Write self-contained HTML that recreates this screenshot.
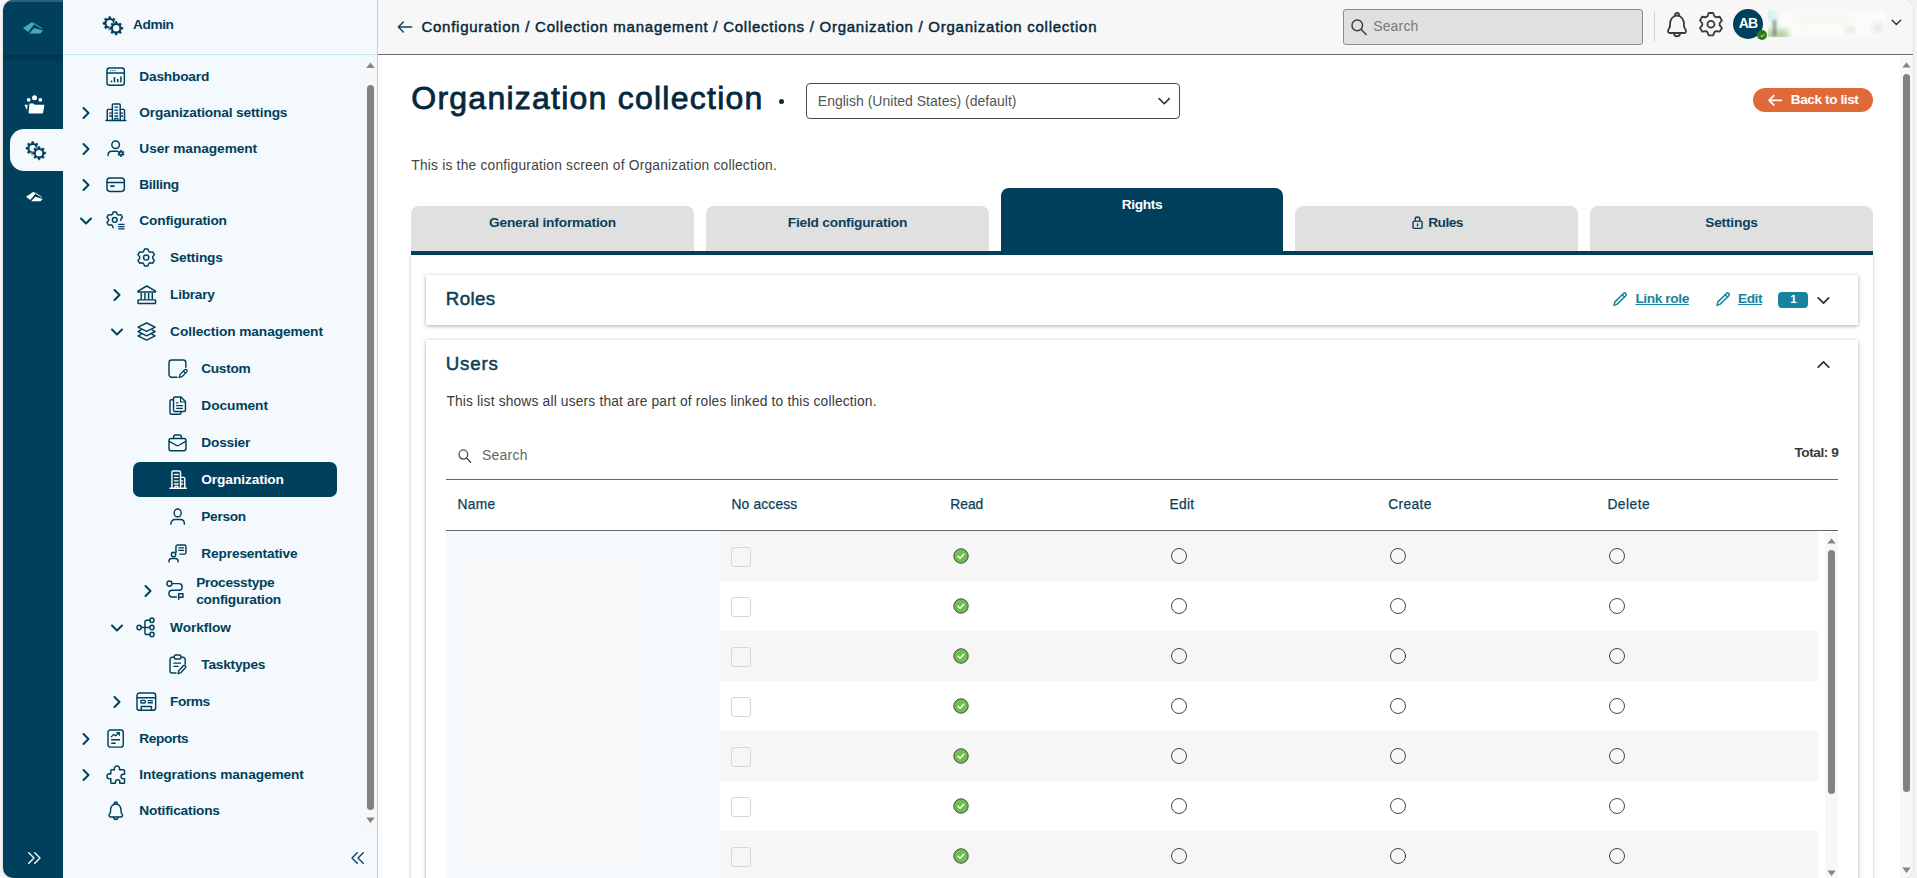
<!DOCTYPE html>
<html lang="en"><head><meta charset="utf-8"><title>Organization collection</title>
<style>
*{box-sizing:border-box}
html,body{margin:0;padding:0}
body{width:1917px;height:878px;overflow:hidden;background:#f3f3f3;font-family:"Liberation Sans",sans-serif;position:relative;color:#333}
.abs,.t{position:absolute}
.t{white-space:nowrap;line-height:20px;height:20px}
.nav{color:#003f5b}
svg{overflow:visible}
svg.fi *{vector-effect:non-scaling-stroke}
</style></head><body>
<div class="abs" style="left:3px;top:0;width:1910px;height:878px;background:#fff;border-radius:10px 9px 9px 10px;overflow:hidden;box-shadow:0 0 0 1px #e6e6e6"><div class="abs" style="left:0;top:0;width:60px;height:878px;background:#00405c"></div><div class="abs" style="left:0;top:55px;width:60px;height:8px;background:linear-gradient(#003249,#00405c)"></div><div class="abs" style="left:0;top:0;width:60px;height:1.5px;background:#2a6179"></div><div class="abs" style="left:7px;top:129px;width:56px;height:42px;background:#f4f9fd;border-radius:14px 0 0 14px"></div><div class="abs" style="left:60px;top:0;width:315px;height:878px;background:#f4f9fd;border-right:1px solid #cbcbcb"></div><div class="abs" style="left:60px;top:54px;width:314px;height:1px;background:#c5e6ee"></div><div class="abs" style="left:375px;top:0;width:1536px;height:55px;background:#f7f7f7;border-bottom:1px solid #6b6b6b"></div><svg class="abs" style="left:20px;top:21px" width="21" height="14" viewBox="0 0 21 14"><path d="M0 7L9 1 11.300 3.300 5.100 11.100z" fill="#4aa5c5"/><path d="M9.600 1L17.500 6 20 8.800 12 3.800z" fill="#4aa5c5"/><path d="M6.100 12.600L11.200 7 20 9.600 17.400 12.400z" fill="#4aa5c5"/></svg><svg class="abs" style="left:23px;top:190.5px" width="17.5" height="11.500" viewBox="0 0 21 14" preserveAspectRatio="none"><path d="M0 7L9 1 11.300 3.300 5.100 11.100z" fill="#fff"/><path d="M9.600 1L17.500 6 20 8.800 12 3.800z" fill="#fff"/><path d="M6.100 12.600L11.200 7 20 9.600 17.400 12.400z" fill="#fff"/></svg><svg class="abs" style="left:21px;top:95px" width="21" height="19" viewBox="0 0 21 19" fill="#fff"><circle cx="10.500" cy="2.700" r="2.500"/><circle cx="4.700" cy="4.800" r="1.900"/><circle cx="16.300" cy="4.800" r="1.900"/><path d="M5.500 8.500h4l1.200 1.200h8.600a1 1 0 0 1 1 1.200l-1.200 6.600a1.200 1.200 0 0 1-1.200 1H5.500a1 1 0 0 1-1-1z"/><path d="M.500 9.800h3.200l-.8 5.400z"/></svg><svg style="position:absolute;left:22.7px;top:140.5px" width="19.6" height="19.6" viewBox="0 0 20 20"><path d="M5.55 2.35 L5.99 0.55 L7.61 0.55 L8.05 2.35 L9.48 2.95 L11.07 1.98 L12.22 3.13 L11.25 4.72 L11.85 6.15 L13.65 6.59 L13.65 8.21 L11.85 8.65 L11.25 10.08 L12.22 11.67 L11.07 12.82 L9.48 11.85 L8.05 12.45 L7.61 14.25 L5.99 14.25 L5.55 12.45 L4.12 11.85 L2.53 12.82 L1.38 11.67 L2.35 10.08 L1.75 8.65 L-0.05 8.21 L-0.05 6.59 L1.75 6.15 L2.35 4.72 L1.38 3.13 L2.53 1.98 L4.12 2.95Z" fill="#00405c" stroke="#00405c" stroke-width="0.5" stroke-linejoin="round"/><circle cx="6.8" cy="7.4" r="3.25" fill="#f4f9fd"/><circle cx="13.3" cy="12.4" r="5.2" fill="#f4f9fd"/><path d="M12.05 7.35 L12.49 5.55 L14.11 5.55 L14.55 7.35 L15.98 7.95 L17.57 6.98 L18.72 8.13 L17.75 9.72 L18.35 11.15 L20.15 11.59 L20.15 13.21 L18.35 13.65 L17.75 15.08 L18.72 16.67 L17.57 17.82 L15.98 16.85 L14.55 17.45 L14.11 19.25 L12.49 19.25 L12.05 17.45 L10.62 16.85 L9.03 17.82 L7.88 16.67 L8.85 15.08 L8.25 13.65 L6.45 13.21 L6.45 11.59 L8.25 11.15 L8.85 9.72 L7.88 8.13 L9.03 6.98 L10.62 7.95Z" fill="#f4f9fd" stroke="#f4f9fd" stroke-width="1.5" stroke-linejoin="round"/><path d="M12.05 7.35 L12.49 5.55 L14.11 5.55 L14.55 7.35 L15.98 7.95 L17.57 6.98 L18.72 8.13 L17.75 9.72 L18.35 11.15 L20.15 11.59 L20.15 13.21 L18.35 13.65 L17.75 15.08 L18.72 16.67 L17.57 17.82 L15.98 16.85 L14.55 17.45 L14.11 19.25 L12.49 19.25 L12.05 17.45 L10.62 16.85 L9.03 17.82 L7.88 16.67 L8.85 15.08 L8.25 13.65 L6.45 13.21 L6.45 11.59 L8.25 11.15 L8.85 9.72 L7.88 8.13 L9.03 6.98 L10.62 7.95Z" fill="#00405c" stroke="#00405c" stroke-width="0.5" stroke-linejoin="round"/><circle cx="13.3" cy="12.4" r="3.25" fill="#f4f9fd"/></svg><svg style="position:absolute;left:21.5px;top:848.5px;color:#fff;" width="18" height="18" viewBox="0 0 24 24" fill="none" stroke="currentColor" stroke-width="1.867" stroke-linecap="round" stroke-linejoin="round"><path d="M5 5l7 7-7 7M13 5l7 7-7 7"/></svg><svg style="position:absolute;left:100.1px;top:15.999999999999998px" width="19.8" height="19.8" viewBox="0 0 20 20"><path d="M5.55 2.35 L5.99 0.55 L7.61 0.55 L8.05 2.35 L9.48 2.95 L11.07 1.98 L12.22 3.13 L11.25 4.72 L11.85 6.15 L13.65 6.59 L13.65 8.21 L11.85 8.65 L11.25 10.08 L12.22 11.67 L11.07 12.82 L9.48 11.85 L8.05 12.45 L7.61 14.25 L5.99 14.25 L5.55 12.45 L4.12 11.85 L2.53 12.82 L1.38 11.67 L2.35 10.08 L1.75 8.65 L-0.05 8.21 L-0.05 6.59 L1.75 6.15 L2.35 4.72 L1.38 3.13 L2.53 1.98 L4.12 2.95Z" fill="#003f5b" stroke="#003f5b" stroke-width="0.5" stroke-linejoin="round"/><circle cx="6.8" cy="7.4" r="3.25" fill="#f4f9fd"/><circle cx="13.3" cy="12.4" r="5.2" fill="#f4f9fd"/><path d="M12.05 7.35 L12.49 5.55 L14.11 5.55 L14.55 7.35 L15.98 7.95 L17.57 6.98 L18.72 8.13 L17.75 9.72 L18.35 11.15 L20.15 11.59 L20.15 13.21 L18.35 13.65 L17.75 15.08 L18.72 16.67 L17.57 17.82 L15.98 16.85 L14.55 17.45 L14.11 19.25 L12.49 19.25 L12.05 17.45 L10.62 16.85 L9.03 17.82 L7.88 16.67 L8.85 15.08 L8.25 13.65 L6.45 13.21 L6.45 11.59 L8.25 11.15 L8.85 9.72 L7.88 8.13 L9.03 6.98 L10.62 7.95Z" fill="#f4f9fd" stroke="#f4f9fd" stroke-width="1.5" stroke-linejoin="round"/><path d="M12.05 7.35 L12.49 5.55 L14.11 5.55 L14.55 7.35 L15.98 7.95 L17.57 6.98 L18.72 8.13 L17.75 9.72 L18.35 11.15 L20.15 11.59 L20.15 13.21 L18.35 13.65 L17.75 15.08 L18.72 16.67 L17.57 17.82 L15.98 16.85 L14.55 17.45 L14.11 19.25 L12.49 19.25 L12.05 17.45 L10.62 16.85 L9.03 17.82 L7.88 16.67 L8.85 15.08 L8.25 13.65 L6.45 13.21 L6.45 11.59 L8.25 11.15 L8.85 9.72 L7.88 8.13 L9.03 6.98 L10.62 7.95Z" fill="#003f5b" stroke="#003f5b" stroke-width="0.5" stroke-linejoin="round"/><circle cx="13.3" cy="12.4" r="3.25" fill="#f4f9fd"/></svg><div class="t nav" style="left:130px;top:13.7px"><span style="font-size:13.7px;font-weight:700;letter-spacing:-0.427px;margin-left:0;">Admin</span></div><div class="abs" style="left:130px;top:462px;width:204px;height:35px;background:#00405c;border-radius:7px"></div><svg class="fi" style="position:absolute;left:103.82px;top:67.62px;color:#003f5b" width="17.35" height="17.35" viewBox="2.000 2.000 20.000 20.000" preserveAspectRatio="none" fill="none" stroke="currentColor" stroke-width="1.45" stroke-linecap="round" stroke-linejoin="round"><rect x="2" y="2" width="20" height="20" rx="3"/><path d="M2 7.800h20"/><path d="M7.200 18.500v-2.200M10.600 18.500v-6M14.400 18.500v-3.800M18 18.500v-6.800" stroke-width="1.500" stroke-linecap="butt"/><path d="M6.200 5h.01M8.700 5h.01M11.200 5h.01" stroke-width="1.300"/></svg><div class="t" style="left:136.3px;top:66.4px;color:#003f5b"><span style="font-size:13.7px;font-weight:700;letter-spacing:-0.189px;margin-left:0;">Dashboard</span></div><svg style="position:absolute;left:73.1px;top:103.0px;color:#003f5b;" width="20" height="20" viewBox="0 0 24 24" fill="none" stroke="currentColor" stroke-width="2.4" stroke-linecap="round" stroke-linejoin="round"><path d="M9 6l6 6-6 6"/></svg><svg class="fi" style="position:absolute;left:102.52px;top:103.92px;color:#003f5b" width="19.85" height="16.55" viewBox="0.300 2.500 24.000 18.500" preserveAspectRatio="none" fill="none" stroke="currentColor" stroke-width="1.45" stroke-linecap="round" stroke-linejoin="round"><path d="M8 21V3.500a1 1 0 0 1 1-1h7.500a1 1 0 0 1 1 1V21"/><path d="M8 8.500H2.800a1 1 0 0 0-1 1V21M17.500 8.500h4.200a1 1 0 0 1 1 1V21M.3 21h24"/><path d="M10.500 6h4.500M10.500 9.300h4.500M10.500 12.600h4.500M10.500 15.900h4.500M4 12.600h4M4 15.900h4M17.500 12.600h3.500M17.500 15.900h3.500" stroke-width="1.300" stroke-linecap="butt"/><path d="M11 21v-2.500h3.500V21" stroke-width="1.300"/></svg><div class="t" style="left:136.3px;top:102.4px;color:#003f5b"><span style="font-size:13.7px;font-weight:700;letter-spacing:-0.144px;margin-left:0;">Organizational settings</span></div><svg style="position:absolute;left:73.1px;top:139.0px;color:#003f5b;" width="20" height="20" viewBox="0 0 24 24" fill="none" stroke="currentColor" stroke-width="2.4" stroke-linecap="round" stroke-linejoin="round"><path d="M9 6l6 6-6 6"/></svg><svg class="fi" style="position:absolute;left:104.72px;top:140.92px;color:#003f5b" width="16.05" height="15.45" viewBox="0.500 1.500 20.990 20.610" preserveAspectRatio="none" fill="none" stroke="currentColor" stroke-width="1.45" stroke-linecap="round" stroke-linejoin="round"><circle cx="10.500" cy="6.500" r="5"/><path d="M.5 21c0-3 1.500-5.800 5-5.800h7.500"/><path d="M16.39 15.32 L16.63 13.89 L18.37 13.89 L18.61 15.32 L19.27 15.70 L20.62 15.19 L21.49 16.70 L20.38 17.62 L20.38 18.38 L21.49 19.30 L20.62 20.81 L19.27 20.30 L18.61 20.68 L18.37 22.11 L16.63 22.11 L16.39 20.68 L15.73 20.30 L14.38 20.81 L13.51 19.30 L14.62 18.38 L14.62 17.62 L13.51 16.70 L14.38 15.19 L15.73 15.70Z" fill="currentColor" stroke-width="0.700"/><circle cx="17.500" cy="18" r="1.200" fill="#f4f9fd" stroke="none"/></svg><div class="t" style="left:136.3px;top:138.4px;color:#003f5b"><span style="font-size:13.7px;font-weight:700;letter-spacing:-0.056px;margin-left:0;">User management</span></div><svg style="position:absolute;left:73.1px;top:175.0px;color:#003f5b;" width="20" height="20" viewBox="0 0 24 24" fill="none" stroke="currentColor" stroke-width="2.4" stroke-linecap="round" stroke-linejoin="round"><path d="M9 6l6 6-6 6"/></svg><svg class="fi" style="position:absolute;left:103.82px;top:177.72px;color:#003f5b" width="17.35" height="13.45" viewBox="2.000 4.000 20.000 16.000" preserveAspectRatio="none" fill="none" stroke="currentColor" stroke-width="1.45" stroke-linecap="round" stroke-linejoin="round"><rect x="2" y="4" width="20" height="16" rx="3.400"/><path d="M2 9.400h20"/><path d="M6.500 13.600h3.500" stroke-width="1.700"/></svg><div class="t" style="left:136.3px;top:174.4px;color:#003f5b"><span style="font-size:13.7px;font-weight:700;letter-spacing:-0.324px;margin-left:0;">Billing</span></div><svg style="position:absolute;left:73.1px;top:211.0px;color:#003f5b;" width="20" height="20" viewBox="0 0 24 24" fill="none" stroke="currentColor" stroke-width="2.4" stroke-linecap="round" stroke-linejoin="round"><path d="M6 9l6 6 6-6"/></svg><svg class="fi" style="position:absolute;left:103.82px;top:211.82px;color:#003f5b" width="17.55" height="16.95" viewBox="0.930 0.570 20.570 20.230" preserveAspectRatio="none" fill="none" stroke="currentColor" stroke-width="1.45" stroke-linecap="round" stroke-linejoin="round"><path d="M8.20 19.43 L7.07 16.58 L5.77 15.82 L2.73 16.27 L0.93 13.16 L2.84 10.75 L2.84 9.25 L0.93 6.84 L2.73 3.73 L5.77 4.18 L7.07 3.42 L8.20 0.57 L11.80 0.57 L12.93 3.42 L14.23 4.18 L17.27 3.73 L19.07 6.84 L17.16 9.25 L17.16 10.75"/><circle cx="10" cy="10" r="2.800"/><path d="M14 15.400h7.500M14 18.100h7.500M14 20.800h7.500" stroke-width="1.300" stroke-linecap="butt"/></svg><div class="t" style="left:136.3px;top:210.4px;color:#003f5b"><span style="font-size:13.7px;font-weight:700;letter-spacing:-0.169px;margin-left:0;">Configuration</span></div><svg class="fi" style="position:absolute;left:135.03px;top:248.82px;color:#003f5b" width="16.35" height="17.05" viewBox="1.610 1.190 20.780 21.620" preserveAspectRatio="none" fill="none" stroke="currentColor" stroke-width="1.45" stroke-linecap="round" stroke-linejoin="round"><path d="M8.62 4.42 L9.94 1.19 L14.06 1.19 L15.38 4.42 L16.88 5.29 L20.33 4.81 L22.39 8.38 L20.25 11.13 L20.25 12.87 L22.39 15.62 L20.33 19.19 L16.88 18.71 L15.38 19.58 L14.06 22.81 L9.94 22.81 L8.62 19.58 L7.12 18.71 L3.67 19.19 L1.61 15.62 L3.75 12.87 L3.75 11.13 L1.61 8.38 L3.67 4.81 L7.12 5.29Z"/><circle cx="12" cy="12" r="3.3"/></svg><div class="t" style="left:167.1px;top:247.4px;color:#003f5b"><span style="font-size:13.7px;font-weight:700;letter-spacing:-0.174px;margin-left:0;">Settings</span></div><svg style="position:absolute;left:103.9px;top:285.0px;color:#003f5b;" width="20" height="20" viewBox="0 0 24 24" fill="none" stroke="currentColor" stroke-width="2.4" stroke-linecap="round" stroke-linejoin="round"><path d="M9 6l6 6-6 6"/></svg><svg class="fi" style="position:absolute;left:134.72px;top:285.62px;color:#003f5b" width="17.55" height="17.55" viewBox="2.500 2.500 19.000 19.000" preserveAspectRatio="none" fill="none" stroke="currentColor" stroke-width="1.45" stroke-linecap="round" stroke-linejoin="round"><path d="M2.500 9V8L12 2.500 21.500 8v1z"/><path d="M6 10v7M10 10v7M14 10v7M18 10v7" stroke-linecap="butt"/><rect x="2.500" y="17.500" width="19" height="4" rx=".5"/></svg><div class="t" style="left:167.1px;top:284.4px;color:#003f5b"><span style="font-size:13.7px;font-weight:700;letter-spacing:-0.270px;margin-left:0;">Library</span></div><svg style="position:absolute;left:103.9px;top:322.0px;color:#003f5b;" width="20" height="20" viewBox="0 0 24 24" fill="none" stroke="currentColor" stroke-width="2.4" stroke-linecap="round" stroke-linejoin="round"><path d="M6 9l6 6 6-6"/></svg><svg class="fi" style="position:absolute;left:134.92px;top:322.73px;color:#003f5b" width="17.15" height="17.15" viewBox="2.500 2.500 19.000 18.500" preserveAspectRatio="none" fill="none" stroke="currentColor" stroke-width="1.45" stroke-linecap="round" stroke-linejoin="round"><path d="M12 2.500l9.500 4.500L12 11.500 2.500 7z"/><path d="M5.800 10l-3.300 1.700 9.500 4.600 9.500-4.600L18.200 10M5.800 14.700l-3.300 1.700L12 21l9.500-4.600-3.300-1.700"/></svg><div class="t" style="left:167.1px;top:321.4px;color:#003f5b"><span style="font-size:13.7px;font-weight:700;letter-spacing:-0.076px;margin-left:0;">Collection management</span></div><svg class="fi" style="position:absolute;left:166.12px;top:360.33px;color:#003f5b" width="18.15" height="17.55" viewBox="2.500 2.500 20.476 19.300" preserveAspectRatio="none" fill="none" stroke="currentColor" stroke-width="1.45" stroke-linecap="round" stroke-linejoin="round"><path d="M11.500 21.500H5.500a3 3 0 0 1-3-3v-13a3 3 0 0 1 3-3h13a3 3 0 0 1 3 3v5"/><path d="M14 21.800l.9-3.200 5.300-5.300a1.600 1.600 0 0 1 2.300 2.300l-5.300 5.300zM18.800 14.700l2.300 2.300" stroke-width="1.300"/></svg><div class="t" style="left:198.3px;top:358.4px;color:#003f5b"><span style="font-size:13.7px;font-weight:700;letter-spacing:-0.334px;margin-left:0;">Custom</span></div><svg class="fi" style="position:absolute;left:166.92px;top:396.73px;color:#003f5b" width="15.45" height="17.25" viewBox="3.500 2.500 17.500 19.000" preserveAspectRatio="none" fill="none" stroke="currentColor" stroke-width="1.45" stroke-linecap="round" stroke-linejoin="round"><path d="M9 2.500h7l5 5V17a1.500 1.500 0 0 1-1.500 1.500H9A1.500 1.500 0 0 1 7.500 17V4A1.500 1.500 0 0 1 9 2.500z"/><path d="M15.500 2.800V8h5.200" stroke-width="1.200"/><path d="M7.500 5.500H5A1.500 1.500 0 0 0 3.500 7v13A1.500 1.500 0 0 0 5 21.500h9.500A1.500 1.500 0 0 0 16 20v-1.500"/><path d="M10.500 9h2.500M10.500 12h7.500M10.500 15h7.500" stroke-width="1.200" stroke-linecap="butt"/></svg><div class="t" style="left:198.3px;top:395.4px;color:#003f5b"><span style="font-size:13.7px;font-weight:700;letter-spacing:-0.034px;margin-left:0;">Document</span></div><svg class="fi" style="position:absolute;left:166.12px;top:434.53px;color:#003f5b" width="16.95" height="15.75" viewBox="2.000 3.000 20.000 18.500" preserveAspectRatio="none" fill="none" stroke="currentColor" stroke-width="1.45" stroke-linecap="round" stroke-linejoin="round"><rect x="2" y="7" width="20" height="14.500" rx="2.500"/><path d="M7.500 7V5A2 2 0 0 1 9.500 3h5a2 2 0 0 1 2 2v2"/><path d="M2.300 10.500l8.700 4.800a2 2 0 0 0 2 0l8.700-4.800" stroke-width="1.300"/></svg><div class="t" style="left:198.3px;top:432.4px;color:#003f5b"><span style="font-size:13.7px;font-weight:700;letter-spacing:-0.206px;margin-left:0;">Dossier</span></div><svg class="fi" style="position:absolute;left:166.72px;top:470.93px;color:#fff" width="16.35" height="17.35" viewBox="2.000 2.500 21.000 19.000" preserveAspectRatio="none" fill="none" stroke="currentColor" stroke-width="1.45" stroke-linecap="round" stroke-linejoin="round"><path d="M4.500 21.500V4A1.500 1.500 0 0 1 6 2.500h8A1.500 1.500 0 0 1 15.500 4v17.500"/><path d="M15.500 9.500h4A1.500 1.500 0 0 1 21 11v10.500M2 21.500h21"/><path d="M7 6.300h6M7 9.800h6M7 13.300h6M7 16.800h6M15.500 13.300h3.500M15.500 16.800h3.500" stroke-width="1.400" stroke-linecap="butt"/><path d="M8.500 21.500v-2.200h3.500v2.200" stroke-width="1.300"/></svg><div class="t" style="left:198.3px;top:469.4px;color:#fff"><span style="font-size:13.7px;font-weight:700;letter-spacing:-0.088px;margin-left:0;">Organization</span></div><svg class="fi" style="position:absolute;left:167.92px;top:508.93px;color:#003f5b" width="13.35" height="15.25" viewBox="2.500 2.500 19.000 19.500" preserveAspectRatio="none" fill="none" stroke="currentColor" stroke-width="1.45" stroke-linecap="round" stroke-linejoin="round"><circle cx="12" cy="7.500" r="5"/><path d="M2.500 22v-.8c0-3.200 2.300-5.200 5.500-5.200h8c3.200 0 5.500 2 5.500 5.200v.8"/></svg><div class="t" style="left:198.3px;top:506.4px;color:#003f5b"><span style="font-size:13.7px;font-weight:700;letter-spacing:-0.324px;margin-left:0;">Person</span></div><svg class="fi" style="position:absolute;left:166.22px;top:545.12px;color:#003f5b" width="16.95" height="17.05" viewBox="0.800 3.000 21.200 20.500" preserveAspectRatio="none" fill="none" stroke="currentColor" stroke-width="1.45" stroke-linecap="round" stroke-linejoin="round"><path d="M10 11.500H9.500V5a2 2 0 0 1 2-2H20a2 2 0 0 1 2 2v7a2 2 0 0 1-2 2h-5.500"/><path d="M13 6.500h6M13 9.500h6" stroke-width="1.300"/><circle cx="6.500" cy="14.500" r="2.700"/><path d="M.8 23.500v-.8c0-2 1.400-3.400 3.400-3.400h4.600c2 0 3.400 1.400 3.400 3.400v.8"/></svg><div class="t" style="left:198.3px;top:543.4px;color:#003f5b"><span style="font-size:13.7px;font-weight:700;letter-spacing:-0.143px;margin-left:0;">Representative</span></div><svg style="position:absolute;left:103.9px;top:618.0px;color:#003f5b;" width="20" height="20" viewBox="0 0 24 24" fill="none" stroke="currentColor" stroke-width="2.4" stroke-linecap="round" stroke-linejoin="round"><path d="M6 9l6 6 6-6"/></svg><svg class="fi" style="position:absolute;left:134.32px;top:618.02px;color:#003f5b" width="17.05" height="18.85" viewBox="0.800 0.800 21.900 22.400" preserveAspectRatio="none" fill="none" stroke="currentColor" stroke-width="1.45" stroke-linecap="round" stroke-linejoin="round"><circle cx="3.500" cy="12" r="2.700"/><circle cx="20" cy="3.500" r="2.700"/><circle cx="20" cy="12" r="2.700"/><circle cx="20" cy="20.500" r="2.700"/><path d="M6.200 12h11.100M17.300 3.500h-3.800a2.500 2.500 0 0 0-2.500 2.500v12a2.500 2.500 0 0 0 2.500 2.500h3.800"/></svg><div class="t" style="left:167.1px;top:617.4px;color:#003f5b"><span style="font-size:13.7px;font-weight:700;letter-spacing:-0.080px;margin-left:0;">Workflow</span></div><svg class="fi" style="position:absolute;left:167.03px;top:655.23px;color:#003f5b" width="15.75" height="18.55" viewBox="3.000 2.000 18.629 20.500" preserveAspectRatio="none" fill="none" stroke="currentColor" stroke-width="1.45" stroke-linecap="round" stroke-linejoin="round"><path d="M8 4.500H5.500A2.500 2.500 0 0 0 3 7v12.500A2.500 2.500 0 0 0 5.500 22H10M16 4.500h2.500A2.500 2.500 0 0 1 21 7v5"/><rect x="8" y="2" width="8" height="4.500" rx="2"/><path d="M7.500 11h8M7.500 14.500h5" stroke-width="1.300"/><path d="M12.500 22.500l.8-3.200 5.500-5.500a1.700 1.700 0 0 1 2.400 2.400l-5.500 5.500z" stroke-width="1.400"/></svg><div class="t" style="left:198.3px;top:654.4px;color:#003f5b"><span style="font-size:13.7px;font-weight:700;letter-spacing:-0.232px;margin-left:0;">Tasktypes</span></div><svg style="position:absolute;left:103.9px;top:692.0px;color:#003f5b;" width="20" height="20" viewBox="0 0 24 24" fill="none" stroke="currentColor" stroke-width="2.4" stroke-linecap="round" stroke-linejoin="round"><path d="M9 6l6 6-6 6"/></svg><svg class="fi" style="position:absolute;left:134.03px;top:692.83px;color:#003f5b" width="18.65" height="17.35" viewBox="2.000 2.000 20.000 20.000" preserveAspectRatio="none" fill="none" stroke="currentColor" stroke-width="1.45" stroke-linecap="round" stroke-linejoin="round"><rect x="2" y="2" width="20" height="20" rx="2.800"/><path d="M2 7.500h20"/><rect x="6" y="10.500" width="5" height="3" rx="1" stroke-width="1.400"/><path d="M14 10.800h4.500M14 13.300h4.500" stroke-width="1.400"/><path d="M6.500 22v-4.500h11V22"/></svg><div class="t" style="left:167.1px;top:691.4px;color:#003f5b"><span style="font-size:13.7px;font-weight:700;letter-spacing:-0.440px;margin-left:0;">Forms</span></div><svg style="position:absolute;left:73.1px;top:729.0px;color:#003f5b;" width="20" height="20" viewBox="0 0 24 24" fill="none" stroke="currentColor" stroke-width="2.4" stroke-linecap="round" stroke-linejoin="round"><path d="M9 6l6 6-6 6"/></svg><svg class="fi" style="position:absolute;left:104.92px;top:729.73px;color:#003f5b" width="15.25" height="17.15" viewBox="2.500 2.000 19.000 20.000" preserveAspectRatio="none" fill="none" stroke="currentColor" stroke-width="1.45" stroke-linecap="round" stroke-linejoin="round"><rect x="2.500" y="2" width="19" height="20" rx="2.800"/><path d="M6.500 13.500h11M6.500 17.500h5.500" stroke-width="1.500" stroke-linecap="butt"/><path d="M6.500 10l3.200-2.800 2.300 1.600 4.500-3.600M13.500 5h3.200v3" stroke-width="1.300"/></svg><div class="t" style="left:136.3px;top:728.4px;color:#003f5b"><span style="font-size:13.7px;font-weight:700;letter-spacing:-0.389px;margin-left:0;">Reports</span></div><svg style="position:absolute;left:73.1px;top:765.0px;color:#003f5b;" width="20" height="20" viewBox="0 0 24 24" fill="none" stroke="currentColor" stroke-width="2.4" stroke-linecap="round" stroke-linejoin="round"><path d="M9 6l6 6-6 6"/></svg><svg class="fi" style="position:absolute;left:103.82px;top:765.83px;color:#003f5b" width="17.55" height="17.35" viewBox="1.502 3.399 18.498 18.601" preserveAspectRatio="none" fill="none" stroke="currentColor" stroke-width="1.45" stroke-linecap="round" stroke-linejoin="round"><path d="M9.200 6.200a2.800 2.800 0 1 1 5.600 0c0 .5-.2.900-.2 1.300H19a1 1 0 0 1 1 1v3.800h-1.300a2.400 2.400 0 0 0 0 4.800H20V21a1 1 0 0 1-1 1h-4v-1.500a2.300 2.300 0 0 0-4.600 0V22H6.500a1 1 0 0 1-1-1v-4c-.4 0-.8.200-1.300.200a2.700 2.700 0 0 1 0-5.400c.5 0 .9.200 1.300.200V8.500a1 1 0 0 1 1-1h2.900c0-.4-.2-.8-.2-1.300z"/></svg><div class="t" style="left:136.3px;top:764.4px;color:#003f5b"><span style="font-size:13.7px;font-weight:700;letter-spacing:-0.090px;margin-left:0;">Integrations management</span></div><svg class="fi" style="position:absolute;left:105.72px;top:801.93px;color:#003f5b" width="13.55" height="17.35" viewBox="1.939 3.200 18.122 20.594" preserveAspectRatio="none" fill="none" stroke="currentColor" stroke-width="1.45" stroke-linecap="round" stroke-linejoin="round"><path d="M8.900 5.300a2.100 2.100 0 0 1 4.200 0"/><path d="M11 5.600C6.500 5.600 4 9 4 13v1.500c0 1.500-.8 2.300-1.600 3.400-1 1.400-.3 3 1.400 3h14.400c1.700 0 2.400-1.600 1.400-3-.8-1.100-1.600-1.900-1.600-3.400V13c0-4-2.500-7.400-7-7.400z"/><path d="M7.800 21.300a3.300 3.300 0 0 0 6.400 0"/></svg><div class="t" style="left:136.3px;top:800.4px;color:#003f5b"><span style="font-size:13.7px;font-weight:700;letter-spacing:-0.184px;margin-left:0;">Notifications</span></div><svg style="position:absolute;left:134.7px;top:581.0px;color:#003f5b;" width="20" height="20" viewBox="0 0 24 24" fill="none" stroke="currentColor" stroke-width="2.4" stroke-linecap="round" stroke-linejoin="round"><path d="M9 6l6 6-6 6"/></svg><svg class="fi" style="position:absolute;left:163.62px;top:581.23px;color:#003f5b" width="15.95" height="18.15" viewBox="1.300 1.800 20.700 22.200" preserveAspectRatio="none" fill="none" stroke="currentColor" stroke-width="1.45" stroke-linecap="round" stroke-linejoin="round"><circle cx="4.500" cy="5" r="3.200"/><path d="M7.700 5H17a4 4 0 0 1 0 8H8a4.200 4.200 0 0 0 0 8.400h5.500"/><path d="M16.500 24v-6.500h5.500v4.200h-5.500" stroke-width="1.500"/></svg><div class="t nav" style="left:193.2px;top:572.4px"><span style="font-size:13.7px;font-weight:700;letter-spacing:-0.294px;margin-left:0;">Processtype</span></div><div class="t nav" style="left:193.2px;top:589.4px"><span style="font-size:13.7px;font-weight:700;letter-spacing:-0.206px;margin-left:0;">configuration</span></div><svg style="position:absolute;left:346.0px;top:848.5px;color:#003f5b;" width="18" height="18" viewBox="0 0 24 24" fill="none" stroke="currentColor" stroke-width="1.867" stroke-linecap="round" stroke-linejoin="round"><path d="M11 5l-7 7 7 7M19 5l-7 7 7 7"/></svg><div class="abs" style="left:361px;top:55px;width:13px;height:774px;background:#f7f7f7"></div><div class="abs" style="left:364px;top:85px;width:7px;height:725px;background:#828282;border-radius:3.5px"></div><svg class="abs" style="left:363px;top:61.5px" width="9" height="6.5" viewBox="0 0 9 6" preserveAspectRatio="none"><path d="M0.300 5.500L4.500 0.500 8.700 5.500z" fill="#858585"/></svg><svg class="abs" style="left:363px;top:817px" width="9" height="6.5" viewBox="0 0 9 6" preserveAspectRatio="none"><path d="M0.300 .5L4.500 5.500 8.700 .5z" fill="#858585"/></svg><svg style="position:absolute;left:391.5px;top:17.0px;color:#0b4560;" width="20" height="20" viewBox="0 0 24 24" fill="none" stroke="currentColor" stroke-width="1.68" stroke-linecap="round" stroke-linejoin="round"><path d="M20 12H4M10 6l-6 6 6 6"/></svg><div class="t" style="left:418.4px;top:17.3px;color:#06283c"><span style="font-size:15px;font-weight:400;letter-spacing:0.749px;margin-left:0;-webkit-text-stroke:0.45px currentColor;">Configuration / Collection management / Collections / Organization / Organization collection</span></div><div class="abs" style="left:1340px;top:9px;width:300px;height:36px;background:#e0e0e0;border:1px solid #8c8c8c;border-radius:3px"></div><svg class="fi" style="position:absolute;left:1348.92px;top:19.53px;color:#3c3c3c" width="14.15" height="14.55" viewBox="3.500 3.500 17.500 17.500" preserveAspectRatio="none" fill="none" stroke="currentColor" stroke-width="1.45" stroke-linecap="round" stroke-linejoin="round"><circle cx="10" cy="10" r="6.5"/><path d="M15 15l6 6"/></svg><div class="t" style="left:1370.2px;top:16px;color:#7a7a7a"><span style="font-size:14px;font-weight:400;letter-spacing:0.156px;margin-left:0;">Search</span></div><div class="abs" style="left:1651px;top:12px;width:1px;height:30px;background:#d4d4d4"></div><svg class="fi" style="position:absolute;left:1665.00px;top:12.70px;color:#3a3a3a" width="18.00" height="23.30" viewBox="1.939 3.200 18.122 20.594" preserveAspectRatio="none" fill="none" stroke="currentColor" stroke-width="1.8" stroke-linecap="round" stroke-linejoin="round"><path d="M8.900 5.300a2.100 2.100 0 0 1 4.200 0"/><path d="M11 5.600C6.500 5.600 4 9 4 13v1.500c0 1.500-.8 2.300-1.600 3.400-1 1.400-.3 3 1.400 3h14.400c1.700 0 2.400-1.600 1.400-3-.8-1.100-1.600-1.900-1.600-3.400V13c0-4-2.500-7.400-7-7.400z"/><path d="M7.800 21.300a3.300 3.300 0 0 0 6.400 0"/></svg><svg class="fi" style="position:absolute;left:1697.10px;top:12.70px;color:#3a3a3a" width="21.90" height="22.40" viewBox="1.610 1.190 20.780 21.620" preserveAspectRatio="none" fill="none" stroke="currentColor" stroke-width="1.8" stroke-linecap="round" stroke-linejoin="round"><path d="M8.62 4.42 L9.94 1.19 L14.06 1.19 L15.38 4.42 L16.88 5.29 L20.33 4.81 L22.39 8.38 L20.25 11.13 L20.25 12.87 L22.39 15.62 L20.33 19.19 L16.88 18.71 L15.38 19.58 L14.06 22.81 L9.94 22.81 L8.62 19.58 L7.12 18.71 L3.67 19.19 L1.61 15.62 L3.75 12.87 L3.75 11.13 L1.61 8.38 L3.67 4.81 L7.12 5.29Z"/><circle cx="12" cy="12" r="3.3"/></svg><div class="abs" style="left:1730px;top:9px;width:30px;height:30px;border-radius:50%;background:#00405c"></div><div class="t" style="left:1730px;top:13.2px;width:30px;text-align:center;color:#fff"><span style="font-size:14px;font-weight:700;letter-spacing:-0.834px;margin-left:0;">AB</span></div><div class="abs" style="left:1754px;top:30px;width:10px;height:10px;border-radius:50%;background:#2f7d12"></div><svg class="abs" style="left:1756.5px;top:32.500px" width="5" height="5" viewBox="0 0 5 5" fill="none" stroke="#fff" stroke-width="0.9"><path d="M.7 2.600l1.300 1.200 2.300-2.500"/></svg><div class="abs" style="left:1765px;top:9.5px;width:118px;height:27.5px;background:#fbfbf9;overflow:hidden"><div class="abs" style="left:-3px;top:0;width:12px;height:12px;background:#d5eef0;filter:blur(3px)"></div><div class="abs" style="left:-2px;top:20px;width:22px;height:10px;background:#8fc07a;filter:blur(3px);opacity:.75"></div><div class="abs" style="left:4.5px;top:10px;width:3.5px;height:16px;background:#5d7a6a;filter:blur(1.6px);opacity:.8"></div><div class="abs" style="left:78px;top:17px;width:8px;height:6px;background:#e4e4e2;filter:blur(2.5px)"></div><div class="abs" style="left:106px;top:14px;width:8px;height:8px;background:#dedede;filter:blur(3px)"></div><div class="abs" style="left:30px;top:4px;width:50px;height:8px;background:#f6f4ec;filter:blur(4px)"></div></div><svg style="position:absolute;left:1884.6px;top:13.9px;color:#3a3a3a;" width="16.8" height="16.8" viewBox="0 0 24 24" fill="none" stroke="currentColor" stroke-width="2.286" stroke-linecap="round" stroke-linejoin="round"><path d="M6 9l6 6 6-6"/></svg><div class="t" style="left:408.3px;top:78px;height:40px;line-height:40px;color:#06283c"><span style="font-size:32px;font-weight:400;letter-spacing:1.240px;margin-left:0;-webkit-text-stroke:0.8px currentColor;">Organization collection</span></div><div class="abs" style="left:775.5px;top:98.500px;width:5px;height:5px;border-radius:50%;background:#0a2a3d"></div><div class="abs" style="left:803px;top:83px;width:374px;height:36px;background:#fff;border:1px solid #4a4a4a;border-radius:4px"></div><div class="t" style="left:814.8px;top:90.5px;color:#555"><span style="font-size:14px;font-weight:400;letter-spacing:0.009px;margin-left:0;">English (United States) (default)</span></div><svg style="position:absolute;left:1150.8px;top:90.8px;color:#333;" width="20.4" height="20.4" viewBox="0 0 24 24" fill="none" stroke="currentColor" stroke-width="1.941" stroke-linecap="round" stroke-linejoin="round"><path d="M6 9l6 6 6-6"/></svg><div class="abs" style="left:1750px;top:88px;width:120px;height:24px;background:#e0693a;border-radius:12px"></div><svg style="position:absolute;left:1762.9px;top:90.5px;color:#fff;" width="18.6" height="18.6" viewBox="0 0 24 24" fill="none" stroke="currentColor" stroke-width="2.194" stroke-linecap="round" stroke-linejoin="round"><path d="M20 12H4M10 6l-6 6 6 6"/></svg><div class="t" style="left:1787.8px;top:88.5px;color:#fff"><span style="font-size:13.6px;font-weight:700;letter-spacing:-0.405px;margin-left:0;">Back to list</span></div><div class="t" style="left:408.3px;top:155px;color:#444"><span style="font-size:13.8px;font-weight:400;letter-spacing:0.203px;margin-left:0;">This is the configuration screen of Organization collection.</span></div><div class="abs" style="left:408px;top:206px;width:283px;height:46px;background:#e0e0e0;border-radius:8px 8px 0 0"></div><div class="t" style="left:408px;top:212.2px;width:283px;text-align:center;color:#0b3f5a"><span style="font-size:13.7px;font-weight:700;letter-spacing:-0.160px;margin-left:0;">General information</span></div><div class="abs" style="left:703px;top:206px;width:283px;height:46px;background:#e0e0e0;border-radius:8px 8px 0 0"></div><div class="t" style="left:703px;top:212.2px;width:283px;text-align:center;color:#0b3f5a"><span style="font-size:13.7px;font-weight:700;letter-spacing:-0.200px;margin-left:0;">Field configuration</span></div><div class="abs" style="left:998px;top:188px;width:282px;height:64px;background:#00405c;border-radius:8px 8px 0 0"></div><div class="t" style="left:998px;top:194.2px;width:282px;text-align:center;color:#fff"><span style="font-size:13.7px;font-weight:700;letter-spacing:-0.382px;margin-left:0;">Rights</span></div><div class="abs" style="left:1292px;top:206px;width:283px;height:46px;background:#e0e0e0;border-radius:8px 8px 0 0"></div><div class="t" style="left:1301px;top:212.2px;width:283px;text-align:center;color:#0b3f5a"><span style="font-size:13.7px;font-weight:700;letter-spacing:-0.549px;margin-left:0;">Rules</span></div><div class="abs" style="left:1587px;top:206px;width:283px;height:46px;background:#e0e0e0;border-radius:8px 8px 0 0"></div><div class="t" style="left:1587px;top:212.2px;width:283px;text-align:center;color:#0b3f5a"><span style="font-size:13.7px;font-weight:700;letter-spacing:-0.188px;margin-left:0;">Settings</span></div><svg class="fi" style="position:absolute;left:1410.20px;top:216.50px;color:#0b3f5a" width="9.10" height="11.40" viewBox="4.500 3.000 15.000 18.000" preserveAspectRatio="none" fill="none" stroke="currentColor" stroke-width="1.4" stroke-linecap="round" stroke-linejoin="round"><rect x="4.500" y="9.500" width="15" height="11.500" rx="2"/><path d="M8 9.500V7a4 4 0 0 1 8 0v2.500M12 14v3"/></svg><div class="abs" style="left:408px;top:251px;width:1462px;height:4px;background:#00405c"></div><div class="abs" style="left:407px;top:255px;width:1464px;height:640px;background:#fff;border-left:1px solid #e2e2e2;border-right:1px solid #e2e2e2;box-shadow:0 0 3px rgba(0,0,0,.12)"></div><div class="abs" style="left:423px;top:275px;width:1432px;height:50px;background:#fff;box-shadow:0 1px 4px rgba(0,0,0,.35)"></div><div class="abs" style="left:423px;top:340px;width:1432px;height:561px;background:#fff;box-shadow:0 1px 4px rgba(0,0,0,.35)"></div><div class="t" style="left:442.8px;top:287.4px;height:24px;line-height:24px;color:#0b3f5a;"><span style="font-size:18.7px;font-weight:400;letter-spacing:0.394px;margin-left:0;-webkit-text-stroke:0.5px currentColor;">Roles</span></div><div class="t" style="left:442.8px;top:352.4px;height:24px;line-height:24px;color:#0b3f5a;"><span style="font-size:18.7px;font-weight:400;letter-spacing:0.786px;margin-left:0;-webkit-text-stroke:0.5px currentColor;">Users</span></div><svg class="fi" style="position:absolute;left:1610.65px;top:293.35px;color:#17839e" width="12.30" height="12.40" viewBox="4.000 3.379 16.121 16.621" preserveAspectRatio="none" fill="none" stroke="currentColor" stroke-width="1.5" stroke-linecap="round" stroke-linejoin="round"><path d="M4 20l1.200-4.700L16.500 4a2.100 2.100 0 0 1 3 3L8.200 18.300z"/><path d="M14.800 5.700l3 3"/></svg><div class="t" style="left:1632.4px;top:288.4px;color:#17839e;text-decoration:underline"><span style="font-size:13.7px;font-weight:700;letter-spacing:-0.395px;margin-left:0;">Link role</span></div><svg class="fi" style="position:absolute;left:1713.75px;top:293.35px;color:#17839e" width="12.30" height="12.40" viewBox="4.000 3.379 16.121 16.621" preserveAspectRatio="none" fill="none" stroke="currentColor" stroke-width="1.5" stroke-linecap="round" stroke-linejoin="round"><path d="M4 20l1.200-4.700L16.500 4a2.100 2.100 0 0 1 3 3L8.200 18.300z"/><path d="M14.800 5.700l3 3"/></svg><div class="t" style="left:1735.1px;top:288.4px;color:#17839e;text-decoration:underline"><span style="font-size:13.7px;font-weight:700;letter-spacing:-0.491px;margin-left:0;">Edit</span></div><div class="abs" style="left:1775px;top:292px;width:30px;height:16px;background:#17839e;border-radius:4px"></div><div class="t" style="left:1775.4px;top:288.6px;width:30px;text-align:center;color:#fff;font-size:11.5px;font-weight:700">1</div><svg style="position:absolute;left:1809.5px;top:289.5px;color:#333;" width="21" height="21" viewBox="0 0 24 24" fill="none" stroke="currentColor" stroke-width="2.057" stroke-linecap="round" stroke-linejoin="round"><path d="M6 9l6 6 6-6"/></svg><svg style="position:absolute;left:1809.5px;top:354.0px;color:#333;" width="21" height="21" viewBox="0 0 24 24" fill="none" stroke="currentColor" stroke-width="2.057" stroke-linecap="round" stroke-linejoin="round"><path d="M6 15l6-6 6 6"/></svg><div class="t" style="left:443.4px;top:391px;color:#3a3a3a"><span style="font-size:13.8px;font-weight:400;letter-spacing:0.165px;margin-left:0;">This list shows all users that are part of roles linked to this collection.</span></div><svg class="fi" style="position:absolute;left:455.93px;top:449.62px;color:#444" width="11.65" height="12.25" viewBox="3.500 3.500 17.500 17.500" preserveAspectRatio="none" fill="none" stroke="currentColor" stroke-width="1.25" stroke-linecap="round" stroke-linejoin="round"><circle cx="10" cy="10" r="6.5"/><path d="M15 15l6 6"/></svg><div class="t" style="left:479px;top:445px;color:#666"><span style="font-size:14px;font-weight:400;letter-spacing:0.236px;margin-left:0;">Search</span></div><div class="t" style="left:1791.4px;top:442.3px;color:#3a3a3a"><span style="font-size:13.7px;font-weight:700;letter-spacing:-0.453px;margin-left:0;">Total: 9</span></div><div class="abs" style="left:443px;top:479px;width:1392px;height:1px;background:#666"></div><div class="abs" style="left:443px;top:530px;width:1392px;height:1px;background:#666"></div><div class="t" style="left:454.5px;top:494px;color:#0b3f5a"><span style="font-size:13.8px;font-weight:400;letter-spacing:0.319px;margin-left:0;-webkit-text-stroke:0.25px currentColor;">Name</span></div><div class="t" style="left:728.4px;top:494px;color:#0b3f5a"><span style="font-size:13.8px;font-weight:400;letter-spacing:0.181px;margin-left:0;-webkit-text-stroke:0.25px currentColor;">No access</span></div><div class="t" style="left:947.3px;top:494px;color:#0b3f5a"><span style="font-size:13.8px;font-weight:400;letter-spacing:-0.005px;margin-left:0;-webkit-text-stroke:0.25px currentColor;">Read</span></div><div class="t" style="left:1166.5px;top:494px;color:#0b3f5a"><span style="font-size:13.8px;font-weight:400;letter-spacing:0.262px;margin-left:0;-webkit-text-stroke:0.25px currentColor;">Edit</span></div><div class="t" style="left:1385.2px;top:494px;color:#0b3f5a"><span style="font-size:13.8px;font-weight:400;letter-spacing:0.349px;margin-left:0;-webkit-text-stroke:0.25px currentColor;">Create</span></div><div class="t" style="left:1604.4px;top:494px;color:#0b3f5a"><span style="font-size:13.8px;font-weight:400;letter-spacing:0.495px;margin-left:0;-webkit-text-stroke:0.25px currentColor;">Delete</span></div><div class="abs" style="left:717px;top:531px;width:1098px;height:50px;background:#f6f6f6"></div><div class="abs" style="left:728px;top:547px;width:20px;height:20px;border:1px solid #d6d6d6;border-radius:3px;background:#f6f6f6"></div><svg class="abs" style="left:950px;top:548px" width="16" height="16" viewBox="0 0 16 16"><circle cx="8" cy="8" r="7.200" fill="#6dc04e" stroke="#4a4a4a" stroke-width="1"/><path d="M5 8.200l2.100 2 3.700-3.900" fill="none" stroke="#fff" stroke-width="1.400" stroke-linecap="round" stroke-linejoin="round"/></svg><div class="abs" style="left:1167.8px;top:547.8px;width:16.4px;height:16.4px;border:1.7px solid #454545;border-radius:50%"></div><div class="abs" style="left:1386.8px;top:547.8px;width:16.4px;height:16.4px;border:1.7px solid #454545;border-radius:50%"></div><div class="abs" style="left:1605.8px;top:547.8px;width:16.4px;height:16.4px;border:1.7px solid #454545;border-radius:50%"></div><div class="abs" style="left:717px;top:581px;width:1098px;height:50px;background:#fff"></div><div class="abs" style="left:728px;top:597px;width:20px;height:20px;border:1px solid #d6d6d6;border-radius:3px;background:#fff"></div><svg class="abs" style="left:950px;top:598px" width="16" height="16" viewBox="0 0 16 16"><circle cx="8" cy="8" r="7.200" fill="#6dc04e" stroke="#4a4a4a" stroke-width="1"/><path d="M5 8.200l2.100 2 3.700-3.900" fill="none" stroke="#fff" stroke-width="1.400" stroke-linecap="round" stroke-linejoin="round"/></svg><div class="abs" style="left:1167.8px;top:597.8px;width:16.4px;height:16.4px;border:1.7px solid #454545;border-radius:50%"></div><div class="abs" style="left:1386.8px;top:597.8px;width:16.4px;height:16.4px;border:1.7px solid #454545;border-radius:50%"></div><div class="abs" style="left:1605.8px;top:597.8px;width:16.4px;height:16.4px;border:1.7px solid #454545;border-radius:50%"></div><div class="abs" style="left:717px;top:631px;width:1098px;height:50px;background:#f6f6f6"></div><div class="abs" style="left:728px;top:647px;width:20px;height:20px;border:1px solid #d6d6d6;border-radius:3px;background:#f6f6f6"></div><svg class="abs" style="left:950px;top:648px" width="16" height="16" viewBox="0 0 16 16"><circle cx="8" cy="8" r="7.200" fill="#6dc04e" stroke="#4a4a4a" stroke-width="1"/><path d="M5 8.200l2.100 2 3.700-3.900" fill="none" stroke="#fff" stroke-width="1.400" stroke-linecap="round" stroke-linejoin="round"/></svg><div class="abs" style="left:1167.8px;top:647.8px;width:16.4px;height:16.4px;border:1.7px solid #454545;border-radius:50%"></div><div class="abs" style="left:1386.8px;top:647.8px;width:16.4px;height:16.4px;border:1.7px solid #454545;border-radius:50%"></div><div class="abs" style="left:1605.8px;top:647.8px;width:16.4px;height:16.4px;border:1.7px solid #454545;border-radius:50%"></div><div class="abs" style="left:717px;top:681px;width:1098px;height:50px;background:#fff"></div><div class="abs" style="left:728px;top:697px;width:20px;height:20px;border:1px solid #d6d6d6;border-radius:3px;background:#fff"></div><svg class="abs" style="left:950px;top:698px" width="16" height="16" viewBox="0 0 16 16"><circle cx="8" cy="8" r="7.200" fill="#6dc04e" stroke="#4a4a4a" stroke-width="1"/><path d="M5 8.200l2.100 2 3.700-3.900" fill="none" stroke="#fff" stroke-width="1.400" stroke-linecap="round" stroke-linejoin="round"/></svg><div class="abs" style="left:1167.8px;top:697.8px;width:16.4px;height:16.4px;border:1.7px solid #454545;border-radius:50%"></div><div class="abs" style="left:1386.8px;top:697.8px;width:16.4px;height:16.4px;border:1.7px solid #454545;border-radius:50%"></div><div class="abs" style="left:1605.8px;top:697.8px;width:16.4px;height:16.4px;border:1.7px solid #454545;border-radius:50%"></div><div class="abs" style="left:717px;top:731px;width:1098px;height:50px;background:#f6f6f6"></div><div class="abs" style="left:728px;top:747px;width:20px;height:20px;border:1px solid #d6d6d6;border-radius:3px;background:#f6f6f6"></div><svg class="abs" style="left:950px;top:748px" width="16" height="16" viewBox="0 0 16 16"><circle cx="8" cy="8" r="7.200" fill="#6dc04e" stroke="#4a4a4a" stroke-width="1"/><path d="M5 8.200l2.100 2 3.700-3.900" fill="none" stroke="#fff" stroke-width="1.400" stroke-linecap="round" stroke-linejoin="round"/></svg><div class="abs" style="left:1167.8px;top:747.8px;width:16.4px;height:16.4px;border:1.7px solid #454545;border-radius:50%"></div><div class="abs" style="left:1386.8px;top:747.8px;width:16.4px;height:16.4px;border:1.7px solid #454545;border-radius:50%"></div><div class="abs" style="left:1605.8px;top:747.8px;width:16.4px;height:16.4px;border:1.7px solid #454545;border-radius:50%"></div><div class="abs" style="left:717px;top:781px;width:1098px;height:50px;background:#fff"></div><div class="abs" style="left:728px;top:797px;width:20px;height:20px;border:1px solid #d6d6d6;border-radius:3px;background:#fff"></div><svg class="abs" style="left:950px;top:798px" width="16" height="16" viewBox="0 0 16 16"><circle cx="8" cy="8" r="7.200" fill="#6dc04e" stroke="#4a4a4a" stroke-width="1"/><path d="M5 8.200l2.100 2 3.700-3.900" fill="none" stroke="#fff" stroke-width="1.400" stroke-linecap="round" stroke-linejoin="round"/></svg><div class="abs" style="left:1167.8px;top:797.8px;width:16.4px;height:16.4px;border:1.7px solid #454545;border-radius:50%"></div><div class="abs" style="left:1386.8px;top:797.8px;width:16.4px;height:16.4px;border:1.7px solid #454545;border-radius:50%"></div><div class="abs" style="left:1605.8px;top:797.8px;width:16.4px;height:16.4px;border:1.7px solid #454545;border-radius:50%"></div><div class="abs" style="left:717px;top:831px;width:1098px;height:50px;background:#f6f6f6"></div><div class="abs" style="left:728px;top:847px;width:20px;height:20px;border:1px solid #d6d6d6;border-radius:3px;background:#f6f6f6"></div><svg class="abs" style="left:950px;top:848px" width="16" height="16" viewBox="0 0 16 16"><circle cx="8" cy="8" r="7.200" fill="#6dc04e" stroke="#4a4a4a" stroke-width="1"/><path d="M5 8.200l2.100 2 3.700-3.900" fill="none" stroke="#fff" stroke-width="1.400" stroke-linecap="round" stroke-linejoin="round"/></svg><div class="abs" style="left:1167.8px;top:847.8px;width:16.4px;height:16.4px;border:1.7px solid #454545;border-radius:50%"></div><div class="abs" style="left:1386.8px;top:847.8px;width:16.4px;height:16.4px;border:1.7px solid #454545;border-radius:50%"></div><div class="abs" style="left:1605.8px;top:847.8px;width:16.4px;height:16.4px;border:1.7px solid #454545;border-radius:50%"></div><div class="abs" style="left:443px;top:531px;width:274px;height:350px;background:#f4f9fd"></div><div class="abs" style="left:450px;top:546px;width:186px;height:320px;background:#f7f9fb;filter:blur(1.5px)"></div><div class="abs" style="left:1822px;top:533px;width:12.5px;height:345px;background:#f7f7f7"></div><div class="abs" style="left:1825px;top:550px;width:7px;height:244px;background:#828282;border-radius:3.500px"></div><svg class="abs" style="left:1824px;top:538px" width="9" height="6" viewBox="0 0 9 6"><path d="M0.300 5.500L4.500 0.500 8.700 5.500z" fill="#858585"/></svg><svg class="abs" style="left:1824px;top:870px" width="9" height="6.5" viewBox="0 0 9 6" preserveAspectRatio="none"><path d="M0.300 .5L4.500 5.500 8.700 .5z" fill="#858585"/></svg><div class="abs" style="left:1897px;top:56px;width:13px;height:822px;background:#f7f7f7"></div><div class="abs" style="left:1900px;top:74px;width:7px;height:718px;background:#828282;border-radius:3.500px"></div><svg class="abs" style="left:1899px;top:62px" width="9" height="6" viewBox="0 0 9 6"><path d="M0.300 5.500L4.500 0.500 8.700 5.500z" fill="#858585"/></svg><svg class="abs" style="left:1899px;top:867px" width="9" height="6.5" viewBox="0 0 9 6" preserveAspectRatio="none"><path d="M0.300 .5L4.500 5.500 8.700 .5z" fill="#858585"/></svg></div></body></html>
